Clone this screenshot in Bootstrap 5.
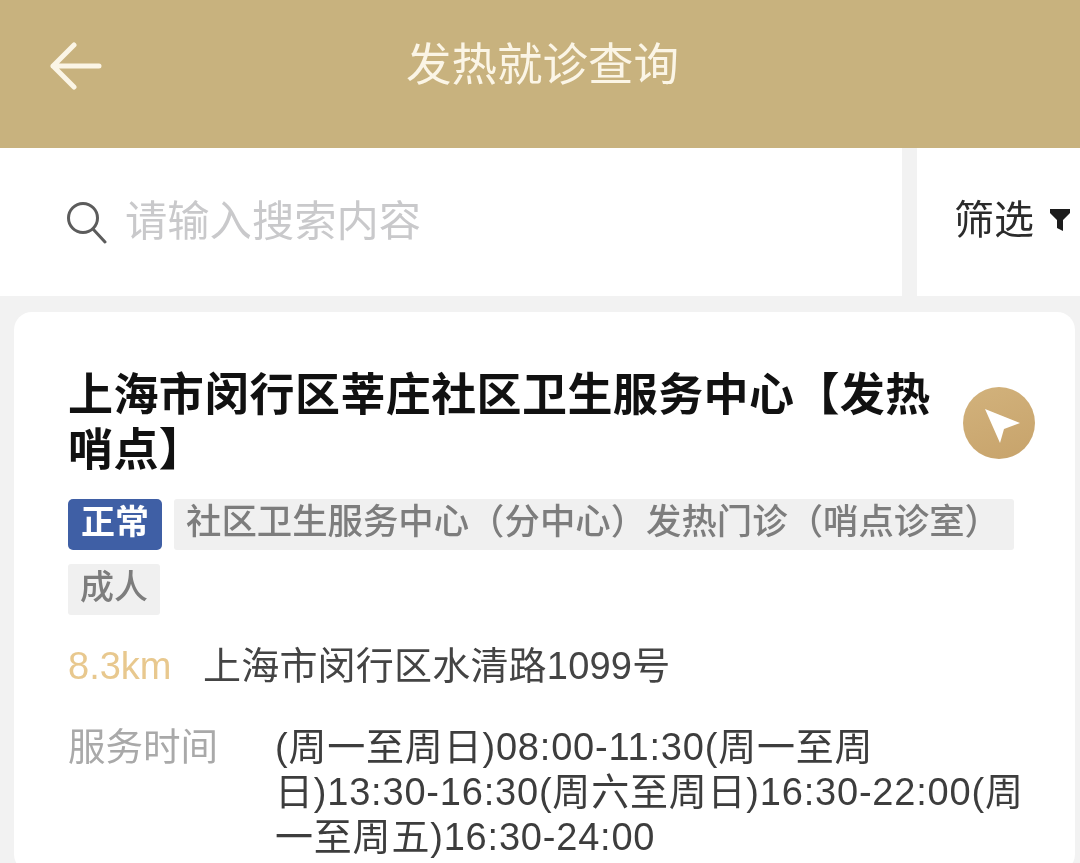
<!DOCTYPE html>
<html lang="zh-CN">
<head>
  <meta charset="UTF-8">
  <title>发热就诊查询</title>
  <link href="https://cdn.jsdelivr.net/npm/bootstrap@5.3.2/dist/css/bootstrap.min.css" rel="stylesheet">
  <style>
    html, body {
      height: 863px;
      overflow: hidden;
    }
    body {
      background-color: #f2f2f2;
      font-family: "Liberation Sans", "Noto Sans CJK SC", sans-serif;
    }
    .page-wrap {
      filter: blur(0.7px);
    }
    .app-head {
      height: 148px;
      padding-left: 50px;
      padding-bottom: 17px;
      background-color: #c8b27e;
      color: #fbf5e6;
    }
    .app-head-title {
      margin-left: 304px;
      font-size: 45.5px;
      line-height: 1;
    }
    .search-row {
      height: 148px;
    }
    .search-box {
      width: 902px;
      padding-left: 66px;
      margin-right: 15px;
      gap: 17px;
      font-size: 42.3px;
      color: #c9c9cb;
    }
    .filter-box {
      flex: 1;
      padding-left: 37px;
      padding-bottom: 4px;
      font-size: 40px;
      color: #2b2b2b;
      gap: 15px;
    }
    .info-card {
      margin: 16px 5px 0 14px;
      padding: 56px 40px 0 54px;
      height: 560px;
      border-radius: 18px;
    }
    .info-title {
      width: 870px;
      font-size: 45px;
      letter-spacing: 0.4px;
      line-height: 55px;
      font-weight: 700;
      color: #111;
    }
    .go-btn {
      width: 72px;
      height: 72px;
      margin-top: 19px;
      margin-left: 25px;
      background: linear-gradient(160deg, #d2b27c, #c7a36b);
    }
    .tag-row {
      margin-top: 21px;
      gap: 14px 12px;
    }
    .tag-item {
      height: 51px;
      padding: 0 12px;
      font-size: 34px;
      line-height: 46px;
      font-weight: 500;
      color: #7d7d7d;
      background-color: #f0f0f0;
      border-radius: 3px;
    }
    .tag-item.tag-ok {
      width: 94px;
      font-weight: 700;
      color: #fff;
      background-color: #3f5fa5;
      border-radius: 5px;
    }
    .tag-item.tag-wide {
      width: 840px;
      font-size: 35.4px;
    }
    .addr-row {
      margin-top: 24px;
      line-height: 54px;
      font-size: 38px;
      letter-spacing: 0.2px;
      color: #444;
    }
    .addr-dist {
      width: 135px;
      letter-spacing: 0;
      color: #e8c88e;
    }
    .time-row {
      margin-top: 32px;
      font-size: 38px;
      letter-spacing: 0.8px;
      line-height: 45px;
      color: #3d3d3d;
    }
    .time-label {
      width: 207px;
      flex-shrink: 0;
      color: #a9a9a9;
      font-size: 37.5px;
      letter-spacing: 0;
    }
    .time-text {
      white-space: nowrap;
    }
  </style>
</head>
<body>
<div class="page-wrap">

  <!-- Header -->
  <div class="app-head d-flex align-items-center">
    <svg width="52" height="48" viewBox="0 0 52 48" fill="none" stroke="#fbf5e6" stroke-width="5" stroke-linecap="round" stroke-linejoin="round">
      <path d="M24 3 3 24l21 21M3 24h46"/>
    </svg>
    <div class="app-head-title">发热就诊查询</div>
  </div>

  <!-- Search and filter -->
  <div class="search-row d-flex">
    <div class="search-box d-flex align-items-center bg-white">
      <svg width="42" height="44" viewBox="0 0 42 44" fill="none" stroke="#5c5c5c" stroke-width="3" stroke-linecap="round">
        <circle cx="17" cy="18" r="14.5"/>
        <path d="m27 29 12 13"/>
      </svg>
      <span>请输入搜索内容</span>
    </div>
    <div class="filter-box d-flex align-items-center bg-white">
      <span>筛选</span>
      <svg width="22" height="24" viewBox="0 0 22 24" fill="#1c1c1c"><path d="M1 1h20v4l-7 7v11l-6-3v-8L1 5z"/></svg>
    </div>
  </div>

  <!-- Result card -->
  <div class="info-card bg-white">
    <div class="d-flex align-items-start">
      <div class="info-title">上海市闵行区莘庄社区卫生服务中心【发热哨点】</div>
      <div class="go-btn rounded-circle flex-shrink-0">
        <svg class="d-block" width="72" height="72" viewBox="0 0 72 72" fill="#fff"><path d="M22 22 57 36 41 42 37 56z"/></svg>
      </div>
    </div>

    <div class="tag-row d-flex flex-wrap">
      <div class="tag-item tag-ok text-center">正常</div>
      <div class="tag-item tag-wide">社区卫生服务中心（分中心）发热门诊（哨点诊室）</div>
      <div class="tag-item">成人</div>
    </div>

    <div class="addr-row d-flex">
      <div class="addr-dist">8.3km</div>
      <div>上海市闵行区水清路1099号</div>
    </div>

    <div class="time-row d-flex">
      <div class="time-label">服务时间</div>
      <div class="time-text">(周一至周日)08:00-11:30(周一至周<br>日)13:30-16:30(周六至周日)16:30-22:00(周<br>一至周五)16:30-24:00</div>
    </div>
  </div>

</div>
</body>
</html>
